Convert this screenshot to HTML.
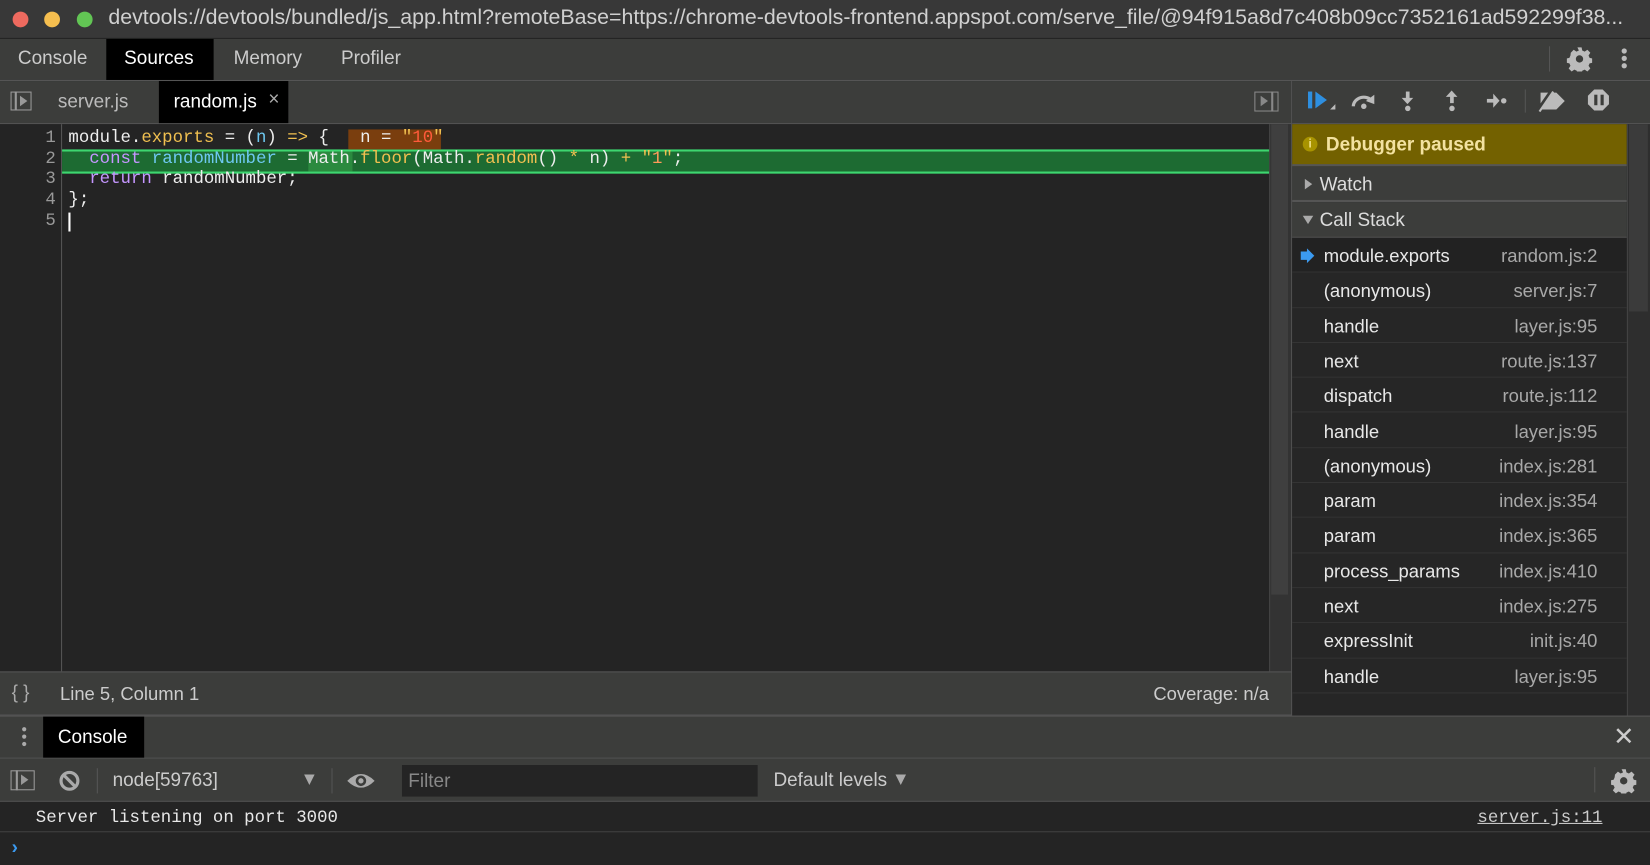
<!DOCTYPE html>
<html><head><meta charset="utf-8"><style>
html,body{margin:0;padding:0;background:#242424;overflow:hidden;width:1650px;height:865px}
#w{position:absolute;left:0;top:0;width:1568px;height:822px;transform:scale(1.05230,1.05231);transform-origin:0 0;font-family:"Liberation Sans",sans-serif;color:#ddd}
.a{position:absolute}
.mono{font-family:"Liberation Mono","DejaVu Sans Mono",monospace}
.tb{background:#3c3d3b}
.row{position:absolute;left:1228px;width:318px;height:33.3px;box-sizing:border-box;border-bottom:1px solid #343434;background:#262626;font-size:17.5px}
.row .n{position:absolute;left:30px;top:7px;color:#e8e8e8}
.row .f{position:absolute;right:28px;top:7px;color:#a8a8a8}
</style></head><body><div id="w">
<!-- title bar -->
<div class="a" style="left:0;top:0;width:1568px;height:36px;background:#383838;border-bottom:1px solid #222"></div>
<div class="a" style="left:12px;top:11px;width:15px;height:15px;border-radius:50%;background:#ee6a5f"></div>
<div class="a" style="left:42px;top:11px;width:15px;height:15px;border-radius:50%;background:#f5be4f"></div>
<div class="a" style="left:73px;top:11px;width:15px;height:15px;border-radius:50%;background:#62c554"></div>
<div class="a" style="left:103px;top:6px;font-size:20.3px;color:#d0d0d0;white-space:nowrap">devtools://devtools/bundled/js_app.html?remoteBase=https://chrome-devtools-frontend.appspot.com/serve_file/@94f915a8d7c408b09cc7352161ad592299f38...</div>
<!-- main tabs -->
<div class="a tb" style="left:0;top:37px;width:1568px;height:39px;border-bottom:1px solid #555"></div>
<div class="a" style="left:101px;top:37px;width:102px;height:39px;background:#000"></div>
<div class="a" style="left:17px;top:45px;font-size:18px;color:#ccc">Console</div>
<div class="a" style="left:118px;top:45px;font-size:18px;color:#fff">Sources</div>
<div class="a" style="left:222px;top:45px;font-size:18px;color:#ccc">Memory</div>
<div class="a" style="left:324px;top:45px;font-size:18px;color:#ccc">Profiler</div>
<div class="a" style="left:1472px;top:44px;width:1px;height:24px;background:#555"></div>
<svg class="a" style="left:1489px;top:44px" width="24" height="24" viewBox="0 0 24 24"><path fill="#bbb" d="M10 1h4l.6 3 2.3 1 2.6-1.7 2.8 2.8-1.7 2.6 1 2.3 3 .6v4l-3 .6-1 2.3 1.7 2.6-2.8 2.8-2.6-1.7-2.3 1-.6 3h-4l-.6-3-2.3-1-2.6 1.7-2.8-2.8 1.7-2.6-1-2.3-3-.6v-4l3-.6 1-2.3L3.7 6.1l2.8-2.8 2.6 1.7 2.3-1zM12 8.5a3.5 3.5 0 1 0 0 7 3.5 3.5 0 0 0 0-7z"/></svg>
<div class="a" style="left:1541px;top:46px;width:5px;height:5px;border-radius:50%;background:#bbb;box-shadow:0 7px 0 #bbb,0 14px 0 #bbb"></div>
<!-- file tabs -->
<div class="a tb" style="left:0;top:77px;width:1228px;height:40px;border-bottom:1px solid #555"></div>
<div class="a" style="left:10px;top:87px;width:20px;height:18px;border:1.5px solid #999;box-sizing:border-box"></div>
<div class="a" style="left:14px;top:87px;width:1.5px;height:18px;background:#999"></div>
<div class="a" style="left:19px;top:91px;width:0;height:0;border-left:7px solid #999;border-top:5px solid transparent;border-bottom:5px solid transparent"></div>
<div class="a" style="left:55px;top:86px;font-size:18px;color:#bbb">server.js</div>
<div class="a" style="left:151px;top:77px;width:123px;height:40px;background:#000"></div>
<div class="a" style="left:165px;top:86px;font-size:18px;color:#fff">random.js</div>
<div class="a" style="left:255px;top:84px;font-size:18px;color:#aaa">×</div>
<div class="a" style="left:1192px;top:87px;width:23px;height:19px;border:1.5px solid #888;box-sizing:border-box"></div>
<div class="a" style="left:1208px;top:87px;width:1.5px;height:19px;background:#888"></div>
<div class="a" style="left:1198px;top:91px;border-left:7px solid #888;border-top:5px solid transparent;border-bottom:5px solid transparent"></div>
<!-- editor -->
<div class="a" style="left:0;top:118px;width:1206px;height:520px;background:#242424"></div>
<div class="a" style="left:58px;top:118px;width:1px;height:520px;background:#555"></div>
<div class="a" style="left:1206px;top:118px;width:22px;height:520px;background:#333;border-left:1px solid #444"></div>
<div class="a" style="left:1208px;top:118px;width:16px;height:447px;background:#3f3f3f"></div>
<div class="a" style="left:59px;top:142px;width:1147px;height:19px;background:#1d6b32;border-top:2px solid #3ed670;border-bottom:2px solid #3ed670"></div>
<div class="a" style="left:293px;top:144px;width:42px;height:19px;background:#2b8a3f"></div>
<div class="a" style="left:331px;top:123px;width:88px;height:19px;background:#7a3e0e"></div>
<div class="a mono" style="left:0;width:53px;text-align:right;top:121px;font-size:16.5px;line-height:19.7px;white-space:pre;color:#999">1
2
3
4
5</div>
<div class="a mono" style="left:65px;top:121px;font-size:16.5px;line-height:19.7px;white-space:pre;color:#eee">module.<span style="color:#f0c050">exports</span> = (<span style="color:#6ec8f0">n</span>) <span style="color:#f0c050">=&gt;</span> {   n = <span style="color:#f0c050">"</span><span style="color:#ff5a3a">10</span><span style="color:#f0c050">"</span>
  <span style="color:#c596ff">const</span> <span style="color:#6ec8f0">randomNumber</span> = Math.<span style="color:#f0c050">floor</span>(Math.<span style="color:#f0c050">random</span>() <span style="color:#f0c050">*</span> n) <span style="color:#f0c050">+</span> <span style="color:#f0c050">"</span><span style="color:#ff9a5a">1</span><span style="color:#f0c050">"</span>;
  <span style="color:#c596ff">return</span> randomNumber;
};
</div>
<div class="a" style="left:65px;top:202px;width:2px;height:18px;background:#fff"></div>
<!-- status bar -->
<div class="a tb" style="left:0;top:638px;width:1228px;height:42px;border-top:1px solid #555;border-bottom:1px solid #555;box-sizing:border-box"></div>
<div class="a" style="left:11px;top:648px;font-size:18px;color:#aaa">{ }</div>
<div class="a" style="left:57px;top:649px;font-size:17.5px;color:#ccc">Line 5, Column 1</div>
<div class="a" style="left:1096px;top:649px;font-size:17.5px;color:#ccc">Coverage: n/a</div>
<!-- right panel -->
<div class="a" style="left:1227px;top:77px;width:1px;height:603px;background:#555"></div>
<div class="a tb" style="left:1228px;top:77px;width:340px;height:40px;border-bottom:1px solid #555"></div>
<svg class="a" style="left:1240px;top:84px" width="340" height="28">
<rect x="3" y="3" width="4" height="16" fill="#2e8fe0"/><path d="M10 3l11 8-11 8z" fill="#2e8fe0"/><path d="M24 20l5-5v5z" fill="#bbb"/>
<path d="M46 17a10 9 0 0 1 18-5" stroke="#bbb" stroke-width="3" fill="none"/><path d="M66 6l0 9-8-3z" fill="#bbb"/><circle cx="56" cy="17" r="2.6" fill="#bbb"/>
<rect x="96" y="3" width="3.5" height="8" fill="#bbb"/><path d="M92 9h11l-5.5 6z" fill="#bbb"/><circle cx="97.8" cy="19" r="2.6" fill="#bbb"/>
<path d="M134 8h11l-5.5-6z" fill="#bbb"/><rect x="138" y="7" width="3.5" height="7" fill="#bbb"/><circle cx="139.8" cy="19" r="2.6" fill="#bbb"/>
<rect x="173" y="10" width="8" height="3.5" fill="#bbb"/><path d="M179 5l6 6.7-6 6.7z" fill="#bbb"/><circle cx="189" cy="11.8" r="2.6" fill="#bbb"/>
<rect x="209" y="1" width="1" height="22" fill="#555"/>
<path d="M224 4h15l8 8-8 8h-15z" fill="#bbb"/><path d="M221 22l14-20" stroke="#3c3d3b" stroke-width="4"/><path d="M223 22l13-19" stroke="#bbb" stroke-width="2"/>
<path d="M275 1h8l6 6v8l-6 6h-8l-6-6v-8z" fill="#bbb"/><rect x="275" y="6" width="3" height="10" fill="#3c3d3b"/><rect x="281" y="6" width="3" height="10" fill="#3c3d3b"/>
</svg>
<div class="a" style="left:1228px;top:118px;width:318px;height:40px;background:#736100;border-bottom:2px solid #555;box-sizing:border-box"></div>
<div class="a" style="left:1238px;top:130px;width:14px;height:14px;border-radius:50%;background:#a89300;color:#f0e08a;font-size:11px;font-weight:bold;text-align:center;line-height:14px">i</div>
<div class="a" style="left:1260px;top:127px;font-size:18px;font-weight:bold;color:#f3e2a0">Debugger paused</div>
<div class="a tb" style="left:1228px;top:158px;width:318px;height:34px;border-bottom:2px solid #555;box-sizing:border-box"></div>
<div class="a" style="left:1240px;top:170px;border-left:7px solid #aaa;border-top:5px solid transparent;border-bottom:5px solid transparent"></div>
<div class="a" style="left:1254px;top:165px;font-size:18px;color:#ddd">Watch</div>
<div class="a tb" style="left:1228px;top:192px;width:318px;height:34px;border-bottom:1px solid #555;box-sizing:border-box"></div>
<div class="a" style="left:1238px;top:205px;border-top:8px solid #aaa;border-left:5.5px solid transparent;border-right:5.5px solid transparent"></div>
<div class="a" style="left:1254px;top:199px;font-size:18px;color:#ddd">Call Stack</div>
<div class="a" style="left:1228px;top:226px;width:318px;height:454px;background:#262626"></div>
<div class="row" style="top:226px;background:#222"><svg class="a" style="left:8px;top:10px" width="14" height="14"><path d="M0 3h6V0l7 7-7 7v-3H0z" fill="#3b9af0"/></svg><span class="n">module.exports</span><span class="f">random.js:2</span></div>
<div class="row" style="top:259.3px"><span class="n">(anonymous)</span><span class="f">server.js:7</span></div>
<div class="row" style="top:292.6px"><span class="n">handle</span><span class="f">layer.js:95</span></div>
<div class="row" style="top:325.9px"><span class="n">next</span><span class="f">route.js:137</span></div>
<div class="row" style="top:359.2px"><span class="n">dispatch</span><span class="f">route.js:112</span></div>
<div class="row" style="top:392.5px"><span class="n">handle</span><span class="f">layer.js:95</span></div>
<div class="row" style="top:425.8px"><span class="n">(anonymous)</span><span class="f">index.js:281</span></div>
<div class="row" style="top:459.1px"><span class="n">param</span><span class="f">index.js:354</span></div>
<div class="row" style="top:492.4px"><span class="n">param</span><span class="f">index.js:365</span></div>
<div class="row" style="top:525.7px"><span class="n">process_params</span><span class="f">index.js:410</span></div>
<div class="row" style="top:559px"><span class="n">next</span><span class="f">index.js:275</span></div>
<div class="row" style="top:592.3px"><span class="n">expressInit</span><span class="f">init.js:40</span></div>
<div class="row" style="top:625.6px"><span class="n">handle</span><span class="f">layer.js:95</span></div>
<div class="a" style="left:1546px;top:118px;width:22px;height:562px;background:#2e2e2e;border-left:1px solid #444"></div>
<div class="a" style="left:1548px;top:118px;width:18px;height:178px;background:#3b3b3b"></div>
<!-- drawer -->
<div class="a tb" style="left:0;top:680px;width:1568px;height:41px;border-top:1px solid #555;border-bottom:1px solid #555;box-sizing:border-box"></div>
<div class="a" style="left:21px;top:691px;width:4px;height:4px;border-radius:50%;background:#aaa;box-shadow:0 7px 0 #aaa,0 14px 0 #aaa"></div>
<div class="a" style="left:41px;top:681px;width:96px;height:39px;background:#000"></div>
<div class="a" style="left:55px;top:690px;font-size:18px;color:#fff">Console</div>
<div class="a" style="left:1533px;top:686px;font-size:24px;color:#ccc">✕</div>
<div class="a tb" style="left:0;top:721px;width:1568px;height:41px;border-bottom:1px solid #555;box-sizing:border-box"></div>
<div class="a" style="left:10px;top:732px;width:23px;height:19px;border:1.5px solid #999;box-sizing:border-box"></div>
<div class="a" style="left:15px;top:732px;width:1.5px;height:19px;background:#999"></div>
<div class="a" style="left:20px;top:736px;border-left:7px solid #999;border-top:5px solid transparent;border-bottom:5px solid transparent"></div>
<svg class="a" style="left:55px;top:731px" width="22" height="22"><circle cx="11" cy="11" r="8" stroke="#aaa" stroke-width="3" fill="none"/><path d="M5.5 5.5l11 11" stroke="#aaa" stroke-width="3"/></svg>
<div class="a" style="left:92px;top:730px;width:1px;height:24px;background:#555"></div>
<div class="a" style="left:107px;top:731px;font-size:18px;color:#ccc">node[59763]</div>
<div class="a" style="left:289px;top:736px;border-top:10px solid #aaa;border-left:5px solid transparent;border-right:5px solid transparent"></div>
<div class="a" style="left:315px;top:730px;width:1px;height:24px;background:#555"></div>
<svg class="a" style="left:329px;top:731px" width="28" height="22"><path d="M1 11Q14 -2 27 11Q14 24 1 11z" fill="#aaa"/><circle cx="14" cy="11" r="5" fill="#3c3d3b"/><circle cx="14" cy="11" r="2.5" fill="#aaa"/></svg>
<div class="a" style="left:382px;top:727px;width:338px;height:30px;background:#242424"></div>
<div class="a" style="left:388px;top:732px;font-size:18px;color:#888">Filter</div>
<div class="a" style="left:735px;top:731px;font-size:18px;color:#ccc">Default levels</div>
<div class="a" style="left:851px;top:736px;border-top:10px solid #aaa;border-left:5px solid transparent;border-right:5px solid transparent"></div>
<div class="a" style="left:1515px;top:729px;width:1px;height:24px;background:#555"></div>
<svg class="a" style="left:1531px;top:730px" width="24" height="24" viewBox="0 0 24 24"><path fill="#bbb" d="M10 1h4l.6 3 2.3 1 2.6-1.7 2.8 2.8-1.7 2.6 1 2.3 3 .6v4l-3 .6-1 2.3 1.7 2.6-2.8 2.8-2.6-1.7-2.3 1-.6 3h-4l-.6-3-2.3-1-2.6 1.7-2.8-2.8 1.7-2.6-1-2.3-3-.6v-4l3-.6 1-2.3L3.7 6.1l2.8-2.8 2.6 1.7 2.3-1zM12 8.5a3.5 3.5 0 1 0 0 7 3.5 3.5 0 0 0 0-7z"/></svg>
<div class="a" style="left:0;top:762px;width:1568px;height:28px;background:#242424;border-bottom:1px solid #444"></div>
<div class="a mono" style="left:34px;top:767px;font-size:16.5px;color:#e8e8e8">Server listening on port 3000</div>
<div class="a mono" style="left:1404px;top:767px;font-size:16.5px;color:#ccc;text-decoration:underline">server.js:11</div>
<div class="a" style="left:0;top:791px;width:1568px;height:31px;background:#242424"></div>
<div class="a" style="left:11px;top:795px;font-size:18px;color:#3b9af0;font-weight:bold">›</div>
</div></body></html>
